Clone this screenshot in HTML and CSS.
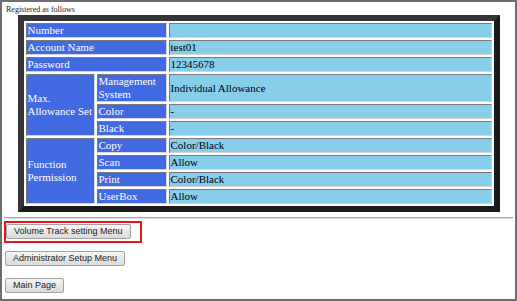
FILE: index.html
```html
<!DOCTYPE html>
<html lang="en">
<head>
    <meta charset="UTF-8">
    <title>Registered as follows</title>
    <link rel="stylesheet" href="styles.css">
</head>
<body>
<div class="frame">
    <p class="caption">Registered as follows</p>
    <table class="info">
        <colgroup>
            <col class="c1">
            <col class="c2">
            <col>
        </colgroup>
        <tr>
            <td class="head" colspan="2">Number</td>
            <td class="val"></td>
        </tr>
        <tr>
            <td class="head" colspan="2">Account Name</td>
            <td class="val">test01</td>
        </tr>
        <tr>
            <td class="head" colspan="2">Password</td>
            <td class="val">12345678</td>
        </tr>
        <tr>
            <td class="head" rowspan="3">Max.<br>Allowance Set</td>
            <td class="head">Management System</td>
            <td class="val">Individual Allowance</td>
        </tr>
        <tr>
            <td class="head">Color</td>
            <td class="val">-</td>
        </tr>
        <tr>
            <td class="head">Black</td>
            <td class="val">-</td>
        </tr>
        <tr>
            <td class="head" rowspan="4">Function<br>Permission</td>
            <td class="head">Copy</td>
            <td class="val">Color/Black</td>
        </tr>
        <tr>
            <td class="head">Scan</td>
            <td class="val">Allow</td>
        </tr>
        <tr>
            <td class="head">Print</td>
            <td class="val">Color/Black</td>
        </tr>
        <tr>
            <td class="head">UserBox</td>
            <td class="val">Allow</td>
        </tr>
    </table>
    <hr class="sep">
    <div class="menu">
        <button class="highlight">Volume Track setting Menu</button>
        <button>Administrator Setup Menu</button>
        <button>Main Page</button>
    </div>
</div>
</body>
</html>
```

FILE: styles.css
```css
html, body {
    margin: 0;
    background: #fff;
}
.frame {
    width: 517px;
    height: 301px;
    box-sizing: border-box;
    border: 2px solid #6e6e6e;
    font-family: "Liberation Serif", "Times New Roman", serif;
}
.caption {
    margin: 0;
    padding: 3px 0 0 4px;
    font-size: 8px;
    line-height: 9px;
    color: #222;
}
.info {
    width: 482px;
    margin: 1px auto 0;
    table-layout: fixed;
    border-collapse: separate;
    border-spacing: 2px;
    border: 6px solid;
    border-color: #353535 #1b1b1b #1b1b1b #353535;
    background: #fff;
    font-size: 11px;
    line-height: 13px;
}
.c1 {
    width: 69px;
}
.c2 {
    width: 70px;
}
.info td {
    border: 1px solid;
    border-color: #7a7a7a #d6d6d6 #d6d6d6 #7a7a7a;
    padding: 0 1px;
    vertical-align: middle;
}
.head {
    background: #4169e1;
    color: #fff;
}
.val {
    background: #87ceeb;
    color: #000;
}
.sep {
    margin: 5px 2px 0;
    height: 0;
    border: 0;
    border-top: 1px solid #a3a3a3;
    border-bottom: 1px solid #e4e4e4;
}
.menu {
    display: flex;
    flex-direction: column;
    align-items: flex-start;
    gap: 12px;
    padding: 5px 0 0 3px;
}
.menu button {
    margin: 0;
    padding: 0 7px;
    height: 15px;
    font-family: "Liberation Sans", Arial, sans-serif;
    font-size: 9px;
    line-height: 13px;
    color: #222;
    background: linear-gradient(#f6f6f6, #dadada);
    border: 1px solid #a2a2a2;
    border-radius: 2px;
}
.menu .highlight {
    position: relative;
    margin-left: 1px;
}
/* red callout drawn over the first button */
.highlight::after {
    content: "";
    position: absolute;
    top: -4px;
    left: -3px;
    right: -12px;
    bottom: -5px;
    border: 2px solid #e8141b;
}
```
